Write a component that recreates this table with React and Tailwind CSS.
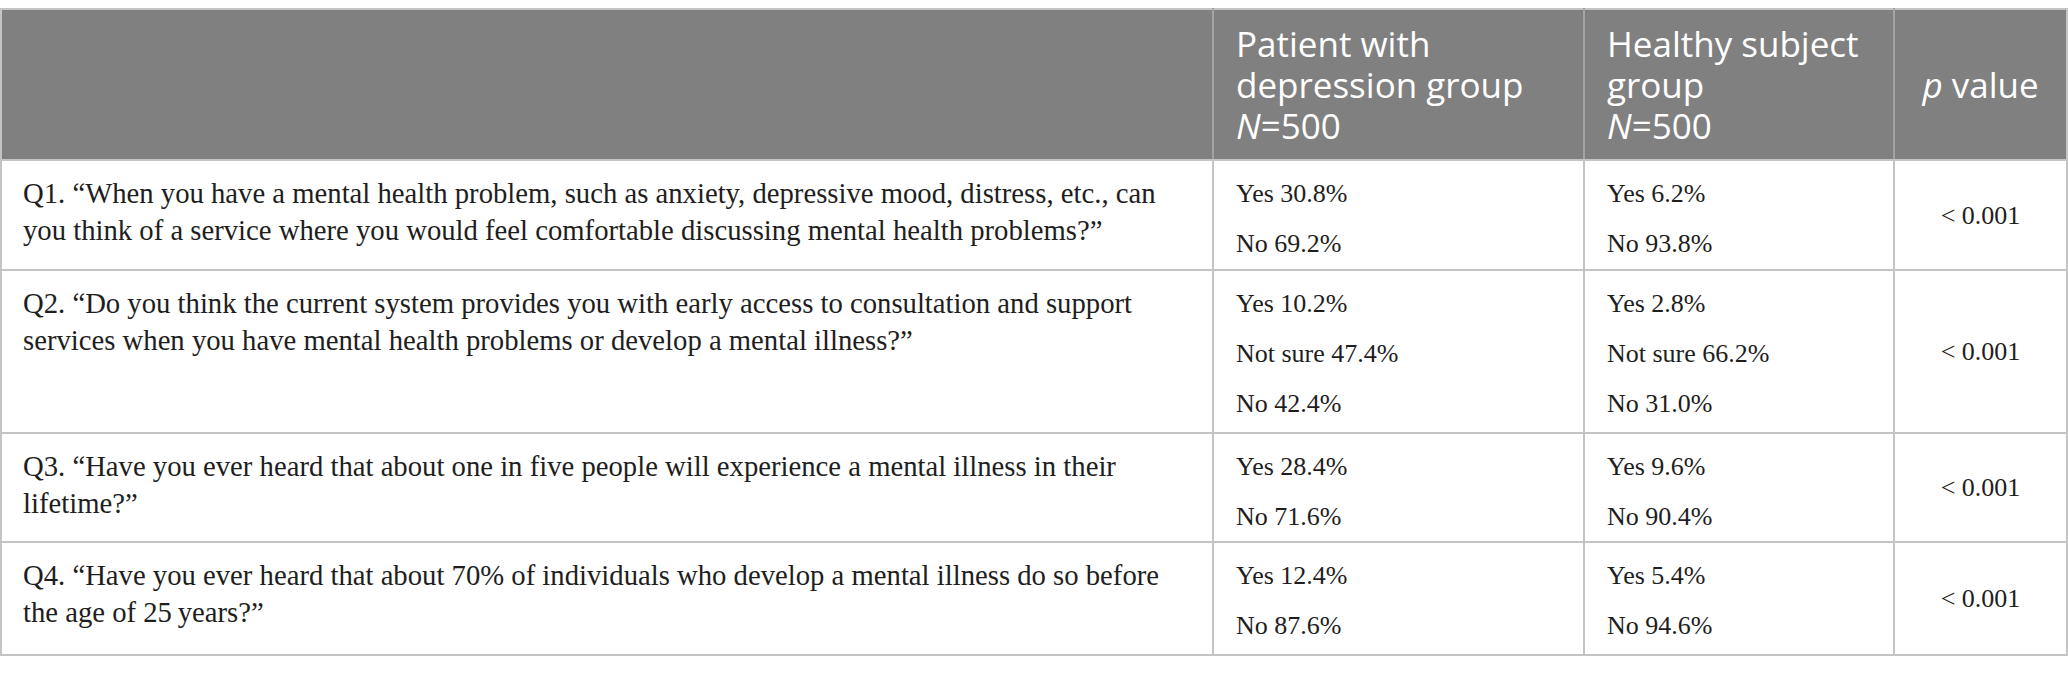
import React from "react";

const rows = [
  {
    q: [
      "Q1. “When you have a mental health problem, such as anxiety, depressive mood, distress, etc., can",
      "you think of a service where you would feel comfortable discussing mental health problems?”",
    ],
    a: ["Yes 30.8%", "No 69.2%"],
    b: ["Yes 6.2%", "No 93.8%"],
    h: "h-[110px]",
  },
  {
    q: [
      "Q2. “Do you think the current system provides you with early access to consultation and support",
      "services when you have mental health problems or develop a mental illness?”",
    ],
    a: ["Yes 10.2%", "Not sure 47.4%", "No 42.4%"],
    b: ["Yes 2.8%", "Not sure 66.2%", "No 31.0%"],
    h: "h-[163px]",
  },
  {
    q: [
      "Q3. “Have you ever heard that about one in five people will experience a mental illness in their",
      "lifetime?”",
    ],
    a: ["Yes 28.4%", "No 71.6%"],
    b: ["Yes 9.6%", "No 90.4%"],
    h: "h-[109px]",
  },
  {
    q: [
      "Q4. “Have you ever heard that about 70% of individuals who develop a mental illness do so before",
      "the age of 25\u2009years?”",
    ],
    a: ["Yes 12.4%", "No 87.6%"],
    b: ["Yes 5.4%", "No 94.6%"],
    h: "h-[113px]",
  },
];

function DataCell({ items }) {
  return (
    <td className="border-2 border-[#c4c4c4] align-top pl-[22px] pr-3 pt-[14px] pb-[6px] text-[26px]">
      <div className="flex flex-col gap-[13px]">
        {items.map((t, i) => (
          <div key={i} className="leading-[37px] whitespace-nowrap">
            {t}
          </div>
        ))}
      </div>
    </td>
  );
}

export default function App() {
  return (
    <div className="w-[2068px] h-[673px] bg-white pt-2">
      <table
        className="table-fixed border-collapse w-[2066px] text-[#1e1e1e]"
        style={{ fontFamily: '"Liberation Serif", "Times New Roman", serif' }}
      >
        <colgroup>
          <col className="w-[1212px]" />
          <col className="w-[371px]" />
          <col className="w-[310px]" />
          <col className="w-[173px]" />
        </colgroup>
        <thead>
          <tr
            className="bg-[#7f807f] text-white h-[151px] text-[35px] leading-[41px]"
            style={{ fontFamily: '"Open Sans", "Noto Sans", sans-serif' }}
          >
            <th className="border-2 border-[#c4c4c4] border-r-[#a3a3a3]"></th>
            <th className="border-2 border-[#c4c4c4] border-x-[#a3a3a3] text-left font-normal pl-[22px] pr-1 align-middle whitespace-nowrap">
              <div>Patient with</div>
              <div>depression group</div>
              <div>
                <i>N</i>=500
              </div>
            </th>
            <th className="border-2 border-[#c4c4c4] border-x-[#a3a3a3] text-left font-normal pl-[22px] pr-1 align-middle whitespace-nowrap">
              <div>Healthy subject</div>
              <div>group</div>
              <div>
                <i>N</i>=500
              </div>
            </th>
            <th className="border-2 border-[#c4c4c4] border-l-[#a3a3a3] text-center font-normal align-middle whitespace-nowrap">
              <i>p</i> value
            </th>
          </tr>
        </thead>
        <tbody>
          {rows.map((r, idx) => (
            <tr key={idx} className={r.h}>
              <td className="border-2 border-[#c4c4c4] align-top pl-[21px] pr-3 pt-[14px] pb-[6px] text-[28.7px]">
                {r.q.map((line, i) => (
                  <div key={i} className="leading-[37px] whitespace-nowrap">
                    {line}
                  </div>
                ))}
              </td>
              <DataCell items={r.a} />
              <DataCell items={r.b} />
              <td className="border-2 border-[#c4c4c4] align-middle text-center text-[26px]">
                &lt; 0.001
              </td>
            </tr>
          ))}
        </tbody>
      </table>
    </div>
  );
}
